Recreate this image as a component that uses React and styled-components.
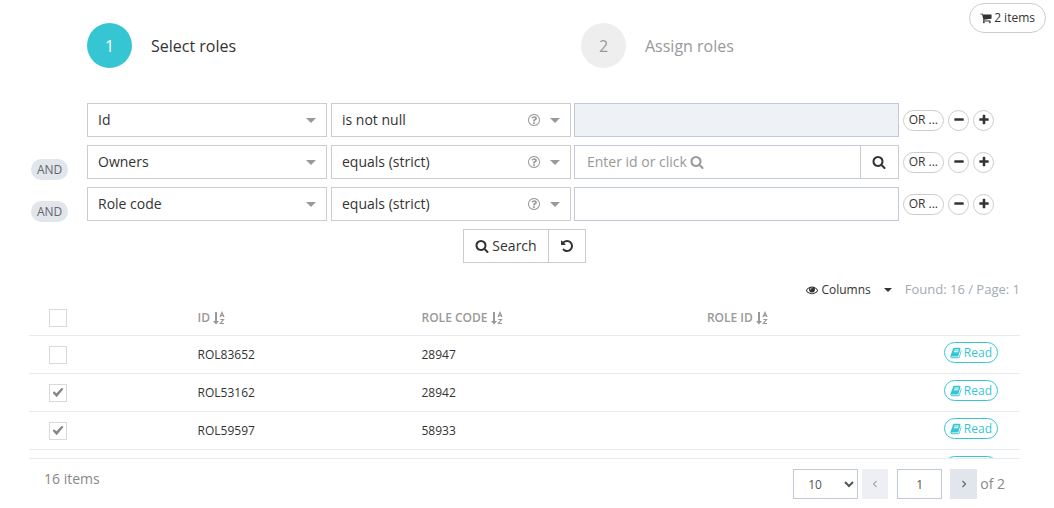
import React from "react";
import styled, { createGlobalStyle, css } from "styled-components";

const GlobalStyle = createGlobalStyle`
  * { box-sizing: border-box; }
  body {
    margin: 0;
    background: #fff;
    color: #333;
    font-family: "Open Sans", sans-serif;
    font-size: 14px;
    line-height: 20px;
  }
  button, input, select { font: inherit; color: inherit; }
`;

const glyphs = {
  search:
    "M1216 832q0-185-131.5-316.5t-316.5-131.5-316.5 131.5-131.5 316.5 131.5 316.5 316.5 131.5 316.5-131.5 131.5-316.5zm512 832q0 52-38 90t-90 38q-54 0-90-38l-343-342q-179 124-399 124-143 0-273.5-55.5t-225-150-150-225-55.5-273.5 55.5-273.5 150-225 225-150 273.5-55.5 273.5 55.5 225 150 150 225 55.5 273.5q0 220-124 399l343 343q37 37 37 90z",
  help:
    "M1008 1200v160q0 14-9 23t-23 9h-160q-14 0-23-9t-9-23v-160q0-14 9-23t23-9h160q14 0 23 9t9 23zm256-496q0 50-15 90t-45.5 69-52 44-59.5 36q-32 18-46.5 28t-26 24-11.5 29v32q0 14-9 23t-23 9h-160q-14 0-23-9t-9-23v-68q0-35 10.5-64.5t24-47.5 39-35.5 41-25.5 44.5-21q53-25 75-43t22-49q0-42-43.5-71.5t-95.5-29.5q-56 0-95 27-29 20-80 83-9 12-25 12-11 0-19-6l-108-82q-10-7-12-20t5-23q122-192 349-192 129 0 238.5 89.5t109.5 214.5zm-368-448q-130 0-248.5 51t-204 136.5-136.5 204-51 248.5 51 248.5 136.5 204 204 136.5 248.5 51 248.5-51 204-136.5 136.5-204 51-248.5-51-248.5-136.5-204-204-136.5-248.5-51zm768 640q0 209-103 385.5t-279.5 279.5-385.5 103-385.5-103-279.5-279.5-103-385.5 103-385.5 279.5-279.5 385.5-103 385.5 103 279.5 279.5 103 385.5z",
  plus:
    "M1600 736v192q0 40-28 68t-68 28h-416v416q0 40-28 68t-68 28h-192q-40 0-68-28t-28-68v-416h-416q-40 0-68-28t-28-68v-192q0-40 28-68t68-28h416v-416q0-40 28-68t68-28h192q40 0 68 28t28 68v416h416q40 0 68 28t28 68z",
  minus:
    "M1600 736v192q0 40-28 68t-68 28h-1216q-40 0-68-28t-28-68v-192q0-40 28-68t68-28h1216q40 0 68 28t28 68z",
  undo:
    "M1664 896q0 156-61 298t-164 245-245 164-298 61q-172 0-327-72.5t-264-204.5q-7-10-6.5-22.5t8.5-20.5l137-138q10-9 25-9 16 2 23 12 73 95 179 147t225 52q104 0 198.5-40.5t163.5-109.5 109.5-163.5 40.5-198.5-40.5-198.5-109.5-163.5-163.5-109.5-198.5-40.5q-98 0-188 35.5t-160 101.5l137 138q31 30 14 69-17 40-59 40h-448q-26 0-45-19t-19-45v-448q0-42 40-59 39-17 69 14l130 129q107-101 244.5-156.5t284.5-55.5q156 0 298 61t245 164 164 245 61 298z",
  cart:
    "M704 1536q0 52-38 90t-90 38-90-38-38-90 38-90 90-38 90 38 38 90zm896 0q0 52-38 90t-90 38-90-38-38-90 38-90 90-38 90 38 38 90zm128-1088v512q0 24-16.5 42.5t-40.5 21.5l-1044 122q13 60 13 70 0 16-24 64h920q26 0 45 19t19 45-19 45-45 19h-1024q-26 0-45-19t-19-45q0-11 8-31.5t16-36 21.5-40 15.5-29.5l-177-823h-204q-26 0-45-19t-19-45 19-45 45-19h256q16 0 28.5 6.5t19.5 15.5 13 24.5 8 26 5.5 29.5 4.5 26h1201q26 0 45 19t19 45z",
  eye:
    "M1664 960q-152-236-381-353 61 104 61 225 0 185-131.5 316.5t-316.5 131.5-316.5-131.5-131.5-316.5q0-121 61-225-229 117-381 353 133 205 333.5 326.5t434.5 121.5 434.5-121.5 333.5-326.5zm-720-384q0-20-14-34t-34-14q-125 0-214.5 89.5t-89.5 214.5q0 20 14 34t34 14 34-14 14-34q0-86 61-147t147-61q20 0 34-14t14-34zm848 384q0 34-20 69-140 230-376.5 368.5t-499.5 138.5-499.5-139-376.5-368q-20-35-20-69t20-69q140-229 376.5-368t499.5-139 499.5 139 376.5 368q20 35 20 69z",
  book:
    "M1703 478q40 57 18 129l-275 906q-19 64-76.5 107.5t-122.5 43.5h-923q-77 0-148.5-53.5t-99.5-131.5q-24-67-2-127 0-4 3-27t4-37q1-8-3-21.5t-3-19.5q2-11 8-21t16.5-23.5 16.5-23.5q23-38 45-91.5t30-91.5q3-10 .5-30t-.5-28q3-11 17-28t17-23q21-36 42-92t25-90q1-9-2.5-32t.5-28q4-13 22-30.5t22-22.5q19-26 42.5-84.5t27.5-96.5q1-8-3-25.5t-2-26.5q2-8 9-18t18-23 17-21q8-12 16.5-30.5t15-35 16-36 19.5-32 26.5-23.5 36-11.5 47.5 5.5l-1 3q38-9 51-9h761q74 0 114 56t18 130l-274 906q-36 119-71.5 153.5t-128.5 34.5h-869q-27 0-38 15-11 16-1 43 24 70 144 70h923q29 0 56-15.5t35-41.5l300-987q7-22 5-57 38 15 59 43zm-1064 2q-4 13 2 22.5t20 9.5h608q13 0 25.5-9.5t16.5-22.5l21-64q4-13-2-22.5t-20-9.5h-608q-13 0-25.5 9.5t-16.5 22.5zm-83 256q-4 13 2 22.5t20 9.5h608q13 0 25.5-9.5t16.5-22.5l21-64q4-13-2-22.5t-20-9.5h-608q-13 0-25.5 9.5t-16.5 22.5z",
};

const Svg = styled.svg`
  display: block;
  flex: none;
  width: ${(p) => p.$size}px;
  height: ${(p) => p.$size}px;
  fill: currentColor;
`;

const Icon = ({ name, size = 14 }) => (
  <Svg $size={size} viewBox="0 0 1792 1792" aria-hidden="true">
    <path d={glyphs[name]} />
  </Svg>
);

const SortSvg = styled.svg`
  flex: none;
  width: 12px;
  height: 14px;
  fill: none;
  stroke: currentColor;
`;

const SortIcon = () => (
  <SortSvg viewBox="0 0 12 14" aria-hidden="true">
    <path d="M3 1V11" strokeWidth="2" />
    <path d="M0 10H6L3 13.5Z" fill="currentColor" stroke="none" />
    <path d="M7 6L9 1.5L11 6M7.6 4.6H10.4M7.3 8.5H10.5L7.3 12.5H11" strokeWidth="1.2" />
  </SortSvg>
);

const Caret = styled.span`
  border: solid transparent;
  border-width: 5px 5px 0;
  border-top-color: ${(p) => p.$color || "#999"};
`;

const Header = styled.header`
  display: flex;
  align-items: flex-start;
  padding: 3px 8px 0 87px;
`;

const Steps = styled.ol`
  flex: 1;
  display: grid;
  grid-template-columns: 14fr 11fr;
  margin: 0;
  padding: 20px 0 0;
  list-style: none;
`;

const Step = styled.li`
  display: flex;
  align-items: center;
  gap: 19px;
  font-size: 16px;
  line-height: 24px;
  color: ${(p) => (p.$active ? "#333" : "#999")};
`;

const StepNumber = styled.span`
  display: flex;
  align-items: center;
  justify-content: center;
  width: 45px;
  height: 45px;
  border-radius: 50%;
  background: ${(p) => (p.$active ? "#36c6d3" : "#eee")};
  color: ${(p) => (p.$active ? "#fff" : "#999")};
`;

const pill = css`
  display: flex;
  align-items: center;
  justify-content: center;
  border: 1px solid #ccc;
  background: #fff;
  padding: 0;
  font-size: 12px;
  line-height: 18px;
`;

const CartButton = styled.button`
  ${pill}
  gap: 2px;
  height: 30px;
  padding: 0 10px;
  border-radius: 15px;
`;

const Filters = styled.form`
  display: flex;
  flex-direction: column;
  gap: 8px;
  padding: 35px 60px 0 30px;
`;

const FilterRow = styled.div`
  display: grid;
  grid-template-columns: 53px 240px 240px 1fr auto;
  grid-template-rows: 34px;
  column-gap: 4px;
  align-items: center;
`;

const AndBadge = styled.span`
  place-self: start;
  margin: 14px 0 0 1px;
  padding: 0 6px;
  height: 21px;
  border-radius: 11px;
  background: #e1e5ec;
  color: #666;
  font-size: 12px;
  line-height: 21px;
`;

const SelectBox = styled.div`
  display: grid;
  align-items: center;
  > * { grid-area: 1 / 1; }
`;

const Select = styled.select`
  appearance: none;
  width: 100%;
  height: 34px;
  padding: 0 10px;
  border: 1px solid #ccc;
  border-radius: 0;
  background: #fff;
`;

const Adornment = styled.span`
  display: flex;
  align-items: center;
  justify-self: end;
  gap: 9px;
  padding-right: 11px;
  color: #999;
  pointer-events: none;
`;

const ValueField = styled.div`
  display: flex;
  margin-left: -1px;
`;

const InputBox = styled.div`
  flex: 1;
  display: grid;
  align-items: center;
  > * { grid-area: 1 / 1; }
`;

const TextInput = styled.input`
  width: 100%;
  min-width: 0;
  height: 34px;
  padding: 0 12px;
  border: 1px solid #c2cad8;
  border-radius: 0;
  background: #fff;
  &:disabled { background: #eef1f5; }
`;

const Hint = styled.span`
  display: flex;
  align-items: center;
  gap: 3px;
  padding-left: 13px;
  color: #999;
  pointer-events: none;
`;

const SquareButton = styled.button`
  display: flex;
  align-items: center;
  justify-content: center;
  gap: 3px;
  height: 34px;
  padding: 0 11px;
  border: 1px solid #ccc;
  background: #fff;
  & + & { margin-left: -1px; }
  ${InputBox} + & {
    margin-left: -1px;
    width: 39px;
  }
`;

const RowActions = styled.div`
  display: flex;
  gap: 4px;
`;

const RoundButton = styled.button`
  ${pill}
  min-width: 21px;
  height: 21px;
  padding: 0 ${(p) => (p.$wide ? 5 : 0)}px;
  border-radius: 11px;
`;

const FormButtons = styled.div`
  display: flex;
  justify-content: center;
  margin-right: -25px;
`;

const Results = styled.section`
  padding: 0 34px 0 29px;
`;

const Toolbar = styled.div`
  display: flex;
  justify-content: flex-end;
  align-items: flex-start;
  gap: 13px;
  padding-top: 16px;
  color: #9eacb4;
  font-size: 13px;
`;

const ColumnsButton = styled.button`
  display: flex;
  align-items: center;
  gap: 3px;
  padding: 0;
  border: 0;
  background: none;
  color: #333;
  font-size: 12px;
  line-height: 22px;
  ${Caret} {
    margin-left: 10px;
    border-width: 4px 4px 0;
  }
`;

const TableFrame = styled.div`
  height: 158px;
  overflow-y: auto;
  scrollbar-width: none;
  border-bottom: 1px solid #e7ecf1;
`;

const Table = styled.table`
  width: 100%;
  table-layout: fixed;
  border-collapse: separate;
  border-spacing: 0;
  font-size: 12px;
  line-height: 18px;
`;

const Col = styled.col`
  width: ${(p) => p.$share};
`;

const cell = css`
  padding: 0 10px 0 ${(p) => (p.$check ? 20 : 10)}px;
  border-bottom: 1px solid #e7ecf1;
  text-align: left;
`;

const HeadCell = styled.th`
  ${cell}
  height: 35px;
  color: #999;
  font-weight: 600;
`;

const Cell = styled.td`
  ${cell}
  height: 38px;
`;

const SortLabel = styled.span`
  display: flex;
  align-items: center;
  gap: 3px;
`;

const Checkbox = styled.input`
  appearance: none;
  display: grid;
  place-items: center;
  width: 18px;
  height: 18px;
  margin: 0;
  border: 1px solid #d9d9d9;
  background: #fff;
  &:checked::after {
    content: "";
    width: 11px;
    height: 10px;
    background: #888;
    clip-path: polygon(0 53%, 14% 38%, 36% 58%, 84% 2%, 100% 14%, 38% 98%);
  }
`;

const ReadButton = styled.button`
  ${pill}
  gap: 2px;
  height: 21px;
  margin: 0 12px 4px auto;
  padding: 0 5px;
  border-color: #36c6d3;
  border-radius: 11px;
  color: #36c6d3;
`;

const Footer = styled.footer`
  display: flex;
  justify-content: space-between;
  align-items: flex-start;
  padding: 10px 15px 9px;
  color: #888;
`;

const Pager = styled.nav`
  display: flex;
  align-items: center;
`;

const PageSize = styled.select`
  width: 65px;
  height: 30px;
  padding: 0 0 0 10px;
  border: 1px solid #c2cad8;
  border-radius: 0;
  background: #fff;
  color: #555;
  font-size: 12px;
`;

const PageInput = styled.input`
  width: 45px;
  height: 30px;
  margin: 0 8px 0 9px;
  border: 1px solid #c2cad8;
  color: #555;
  font-size: 12px;
  text-align: center;
`;

const PageButton = styled.button`
  display: flex;
  align-items: center;
  justify-content: center;
  width: 27px;
  height: 30px;
  padding: 0;
  border: 0;
  background: #e1e5ec;
  color: #666;
  &:disabled {
    width: 26px;
    margin-left: 4px;
    background: #eeeff4;
    color: #aaa;
  }
`;

const PageTotal = styled.span`
  padding-left: 3px;
`;

const Angle = ({ d }) => (
  <svg width="6" height="8" viewBox="0 0 6 8" fill="none" stroke="currentColor" strokeWidth="1.2" aria-hidden="true">
    <path d={d} />
  </svg>
);

const filters = [
  { field: "Id", op: "is not null", kind: "disabled" },
  { field: "Owners", op: "equals (strict)", kind: "lookup" },
  { field: "Role code", op: "equals (strict)", kind: "text" },
];

const rows = [
  { id: "ROL83652", code: "28947", checked: false },
  { id: "ROL53162", code: "28942", checked: true },
  { id: "ROL59597", code: "58933", checked: true },
  { id: "", code: "", checked: false },
];

const Filter = ({ field, op, kind, joined }) => (
  <FilterRow>
    {joined ? <AndBadge>AND</AndBadge> : <span />}
    <SelectBox>
      <Select aria-label="Field"><option>{field}</option></Select>
      <Adornment><Caret /></Adornment>
    </SelectBox>
    <SelectBox>
      <Select aria-label="Condition"><option>{op}</option></Select>
      <Adornment><Icon name="help" /><Caret /></Adornment>
    </SelectBox>
    <ValueField>
      <InputBox>
        <TextInput aria-label={`${field} value`} disabled={kind === "disabled"} />
        {kind === "lookup" && <Hint>Enter id or click <Icon name="search" /></Hint>}
      </InputBox>
      {kind === "lookup" && (
        <SquareButton type="button" aria-label="Find owner"><Icon name="search" /></SquareButton>
      )}
    </ValueField>
    <RowActions>
      <RoundButton type="button" $wide>OR ...</RoundButton>
      <RoundButton type="button" aria-label="Remove condition"><Icon name="minus" size={12} /></RoundButton>
      <RoundButton type="button" aria-label="Add condition"><Icon name="plus" size={12} /></RoundButton>
    </RowActions>
  </FilterRow>
);

export default function App() {
  return (
    <>
      <GlobalStyle />
      <Header>
        <Steps>
          <Step $active><StepNumber $active>1</StepNumber>Select roles</Step>
          <Step><StepNumber>2</StepNumber>Assign roles</Step>
        </Steps>
        <CartButton type="button"><Icon name="cart" size={12} />2 items</CartButton>
      </Header>
      <main>
        <Filters onSubmit={(e) => e.preventDefault()}>
          {filters.map((f, i) => <Filter key={f.field} {...f} joined={i > 0} />)}
          <FormButtons>
            <SquareButton type="submit"><Icon name="search" />Search</SquareButton>
            <SquareButton type="reset" aria-label="Reset"><Icon name="undo" /></SquareButton>
          </FormButtons>
        </Filters>
        <Results>
          <Toolbar>
            <ColumnsButton type="button">
              <Icon name="eye" size={12} />Columns<Caret $color="#333" />
            </ColumnsButton>
            <span>Found: 16 / Page: 1</span>
          </Toolbar>
          <TableFrame>
            <Table>
              <colgroup>
                <Col $share="16%" />
                <Col $share="22.6%" />
                <Col $share="28.8%" />
                <Col />
              </colgroup>
              <thead>
                <tr>
                  <HeadCell $check><Checkbox type="checkbox" aria-label="Select all" /></HeadCell>
                  <HeadCell><SortLabel>ID<SortIcon /></SortLabel></HeadCell>
                  <HeadCell><SortLabel>ROLE CODE<SortIcon /></SortLabel></HeadCell>
                  <HeadCell><SortLabel>ROLE ID<SortIcon /></SortLabel></HeadCell>
                </tr>
              </thead>
              <tbody>
                {rows.map((r, i) => (
                  <tr key={i}>
                    <Cell $check>
                      <Checkbox type="checkbox" aria-label="Select role" defaultChecked={r.checked} />
                    </Cell>
                    <Cell>{r.id}</Cell>
                    <Cell>{r.code}</Cell>
                    <Cell><ReadButton type="button"><Icon name="book" size={12} />Read</ReadButton></Cell>
                  </tr>
                ))}
              </tbody>
            </Table>
          </TableFrame>
          <Footer>
            <span>16 items</span>
            <Pager aria-label="Pages">
              <PageSize aria-label="Items per page"><option>10</option></PageSize>
              <PageButton type="button" disabled aria-label="Previous page"><Angle d="M4.5 1L1.5 4L4.5 7" /></PageButton>
              <PageInput aria-label="Page" defaultValue="1" />
              <PageButton type="button" aria-label="Next page"><Angle d="M1.5 1L4.5 4L1.5 7" /></PageButton>
              <PageTotal>of 2</PageTotal>
            </Pager>
          </Footer>
        </Results>
      </main>
    </>
  );
}
